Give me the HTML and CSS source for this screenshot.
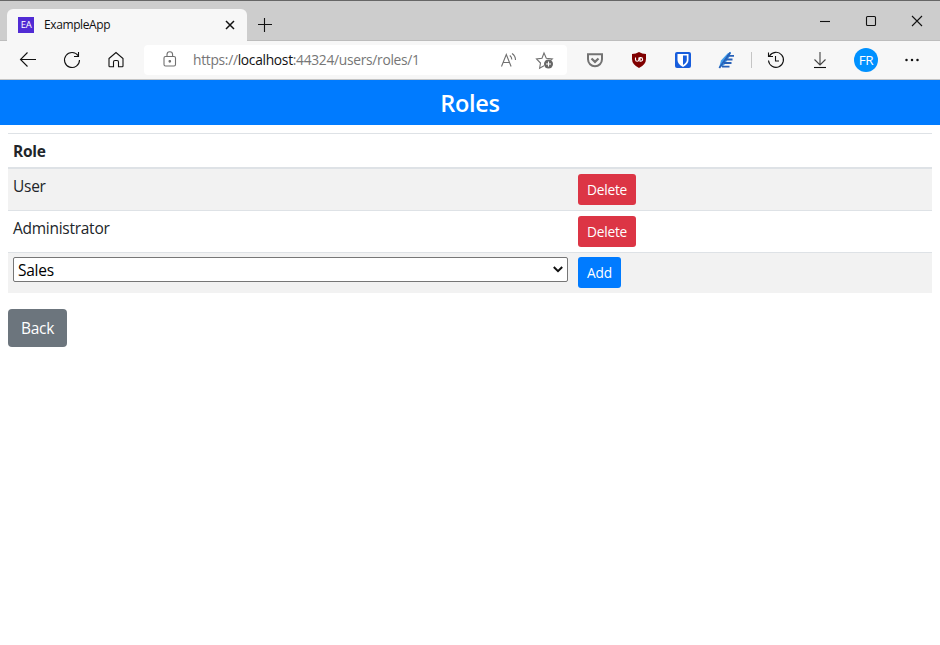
FILE: index.html
```html
<!DOCTYPE html>
<html lang="en">
<head>
<meta charset="utf-8">
<title>ExampleApp</title>
<link rel="stylesheet" href="styles.css">
</head>
<body>
<header class="titlebar">
  <div class="tab">
    <span class="favicon">EA</span>
    <span class="tab-title">ExampleApp</span>
    <svg class="tab-close" width="10" height="10" viewBox="0 0 10 10"><path d="M1 1l8 8M9 1L1 9"/></svg>
  </div>
  <svg class="new-tab" width="14" height="14" viewBox="0 0 14 14"><path d="M6.500 0v14M0 6.500h14"/></svg>
  <div class="window-buttons">
    <svg width="46" height="40" viewBox="0 0 46 40"><path d="M18 20.5h10"/></svg>
    <svg width="46" height="40" viewBox="0 0 46 40"><rect x="18.5" y="15.5" width="9" height="9" rx="1"/></svg>
    <svg width="46" height="40" viewBox="0 0 46 40"><path d="M18 15l10 10M28 15L18 25"/></svg>
  </div>
</header>
<nav class="toolbar">
  <div class="nav-buttons">
    <svg width="44" height="38" viewBox="0 0 44 38"><path d="M36 18.5H20.5M27.5 11.5l-7 7 7 7"/></svg>
    <svg width="44" height="38" viewBox="0 0 44 38"><path d="M34.2 14.8A7.5 7.5 0 1 0 35.5 19M34.500 11v4.500H30"/></svg>
    <svg width="44" height="38" viewBox="0 0 44 38"><path d="M21 17.5l7-6 7 6V25q0 .8-.8.8h-3.7V21q0-1.500-1.500-1.500h-2q-1.500 0-1.500 1.500v4.800h-3.700q-.8 0-.8-.8z"/></svg>
  </div>
  <div class="address">
    <svg class="lock" width="14" height="17" viewBox="0 0 14 17"><rect x="1" y="5.500" width="11.500" height="9.500" rx="1.500"/><path d="M4 5.500V3.600a2.800 2.800 0 0 1 5.600 0v1.900"/><circle cx="6.800" cy="10.300" r=".8" fill="#666"/></svg>
    <span class="url">https://<b>localhost</b>:44324/users/roles/1</span>
    <svg class="read" width="18" height="17" viewBox="0 0 18 17"><path d="M1.500 14.500L6.300 2.500l4.800 12M3.200 10.500h6.200M9.800 3.500q2 1.500 2 4M12 1.500q3.500 2.200 3.500 6.500"/></svg>
    <svg class="favorite" width="20" height="19" viewBox="0 0 20 19"><path d="M9 14.800l-4.400 2.400.9-5.200L1.500 8l5.500-.7L9 2l2.300 5.300 6 .7-2 1.700"/><circle cx="13.500" cy="13" r="4.500" fill="#666" stroke="none"/><path d="M11 13h5M13.500 10.500v5" stroke="#fff"/></svg>
  </div>
  <div class="extensions">
    <svg width="44" height="38" viewBox="0 0 44 38"><path d="M15 13.300h14v5a7 7 0 0 1-14 0z" stroke="#737373" stroke-width="2"/><path d="M18.500 17.500l3.500 3.400 3.500-3.400" stroke="#737373" stroke-width="2.200"/></svg>
    <svg width="44" height="38" viewBox="0 0 44 38"><path d="M22 11q3 2 7 2v5q0 5.500-7 9-7-3.500-7-9v-5q4 0 7-2z" fill="#800000" stroke="none"/><path d="M18.500 16.500v2q0 1.800 1.700 1.800t1.700-1.800v-2M23 20.200v-3.600h.8a1.800 1.800 0 0 1 0 3.600z" stroke="#fff"/></svg>
    <svg width="44" height="38" viewBox="0 0 44 38"><rect x="14" y="11" width="16" height="16" rx="2" fill="#175ddc" stroke="none"/><path d="M16.500 13h11v6q0 4-5.500 7-5.500-3-5.500-7z" fill="#fff" stroke="none"/><path d="M22 14.500h3.800V19q0 2.700-3.800 5z" fill="#175ddc" stroke="none"/></svg>
    <svg width="44" height="38" viewBox="0 0 44 38"><path d="M14 26.800l2-7.300 6.500-7 3.500-1.700-1.500 5-5.500 8.500z" fill="#3f9bea" stroke="none"/><path d="M14.300 27L25.300 11.500M22 14.800h7M21 18.500h6.500M19 22h7.500M17 25.700h7.500" stroke="#2861b8" stroke-width="1.800"/></svg>
    <span class="divider"></span>
  </div>
  <div class="tools">
    <svg width="44" height="38" viewBox="0 0 44 38"><path d="M15.500 15A7.500 7.500 0 1 1 14.500 19.500M14.500 11.500V15.500h4.500M21.500 15v5h3.500"/></svg>
    <svg width="44" height="38" viewBox="0 0 44 38"><path d="M22 11v12.500M16.500 18.500l5.500 5.500 5.500-5.500" stroke="#444"/><path d="M16 26.500h12"/></svg>
    <span class="avatar">FR</span>
    <svg width="44" height="38" viewBox="0 0 44 38"><g fill="#111" stroke="none"><circle cx="16.500" cy="19" r="1.250"/><circle cx="22" cy="19" r="1.250"/><circle cx="27.500" cy="19" r="1.250"/></g></svg>
  </div>
</nav>
<h1 class="page-title">Roles</h1>
<main>
  <div class="roles">
    <div class="row head"><div>Role</div><div></div></div>
    <div class="row striped first"><div>User</div><div><button class="btn small danger">Delete</button></div></div>
    <div class="row"><div>Administrator</div><div><button class="btn small danger">Delete</button></div></div>
    <div class="row striped last"><div><div class="select"><span>Sales</span><svg width="10" height="7" viewBox="0 0 10 7"><path d="M.8 1l4.200 4.200L9.200 1"/></svg></div></div><div><button class="btn small primary">Add</button></div></div>
  </div>
  <button class="btn secondary">Back</button>
</main>
</body>
</html>
```
FILE: styles.css
```css
* { box-sizing: border-box; }
body { margin: 0; background: #fff; color: #212529; font-family: "Open Sans", "Noto Sans", sans-serif; font-size: 15.5px; letter-spacing: -.27px; }
svg { display: block; fill: none; stroke: #111; stroke-width: 1.1; flex: none; }
.titlebar { height: 41px; display: flex; align-items: flex-start; background: #cdcdcd; border-top: 1px solid #666; padding-left: 7px; box-shadow: inset 0 -1px #bdbdbd; }
.tab { width: 240px; height: 32px; margin-top: 8px; padding: 0 12px 0 11px; display: flex; align-items: center; background: #f7f7f7; border-radius: 6px 6px 0 0; }
.favicon { width: 16px; height: 16px; background: #512bd4; color: #fff; font-size: 9.5px; line-height: 16px; text-align: center; }
.tab-title { margin-left: 10px; font-size: 12px; line-height: 16px; color: #111; letter-spacing: -.4px; }
.tab-close { margin-left: auto; stroke-width: 1.5; }
.new-tab { margin: 17px 0 0 11px; }
.window-buttons { display: flex; margin-left: auto; }
.toolbar { height: 39px; display: flex; background: #f7f7f7; border-bottom: 1px solid #c5c5c5; }
.nav-buttons { display: flex; width: 144px; }
.address { width: 423px; height: 30px; margin-top: 4px; padding: 0 12px 0 19px; display: flex; align-items: center; background: #fff; border-radius: 4px; }
.address svg { stroke: #707070; }
.lock { margin-bottom: 1px; }
.url { margin-left: 16px; font-size: 13.8px; line-height: 20px; color: #767676; white-space: nowrap; letter-spacing: -.3px; }
.url b { color: #111; font-weight: 400; }
.read { margin-left: auto; }
.favorite { margin-left: 17px; }
.extensions { display: flex; margin-left: 6px; align-items: center; }
.divider { width: 1px; height: 16px; background: #c5c5c5; margin-left: 2px; }
.tools { display: flex; align-items: center; margin-left: 2px; }
.avatar { width: 24px; height: 24px; margin: 0 12px; border-radius: 50%; background: #0091ff; color: #fff; font-size: 13.5px; line-height: 24px; text-align: center; letter-spacing: -.3px; }
.page-title { height: 45px; margin: 0; background: #007bff; color: #fff; text-align: center; font-size: 23.5px; font-weight: 600; line-height: 46px; }
main { padding: 8px; }
.roles { border-top: 1px solid #dee2e6; margin-bottom: 16px; }
.row { height: 42px; display: grid; grid-template-columns: 565px 1fr; padding-top: 5px; border-top: 1px solid #dee2e6; line-height: 24px; }
.row > div { padding: 0 5px; }
.row.head { height: 33px; border: 0; font-weight: 700; }
.row.first { height: 43px; border-top: 2px solid #dee2e6; }
.row.last { height: 41px; padding-top: 4px; }
.striped { background: #f2f2f2; }
.btn { display: block; height: 38px; padding: 0; border: 0; border-radius: 4px; color: #fff; font: 15.5px/38px "Open Sans", sans-serif; letter-spacing: -.27px; text-align: center; }
.small { height: 31px; border-radius: 3px; font-size: 13.7px; line-height: 31px; letter-spacing: -.2px; }
.danger { width: 58px; background: #dc3545; }
.primary { width: 43px; background: #007bff; }
.secondary { width: 59px; background: #6c757d; }
.select { width: 555px; height: 25px; display: flex; align-items: center; justify-content: space-between; padding: 1px 4px 0; background: #fff; border: 1px solid #767676; border-radius: 2px; color: #000; }
.select svg { stroke-width: 2; margin-bottom: 1px; }
```
